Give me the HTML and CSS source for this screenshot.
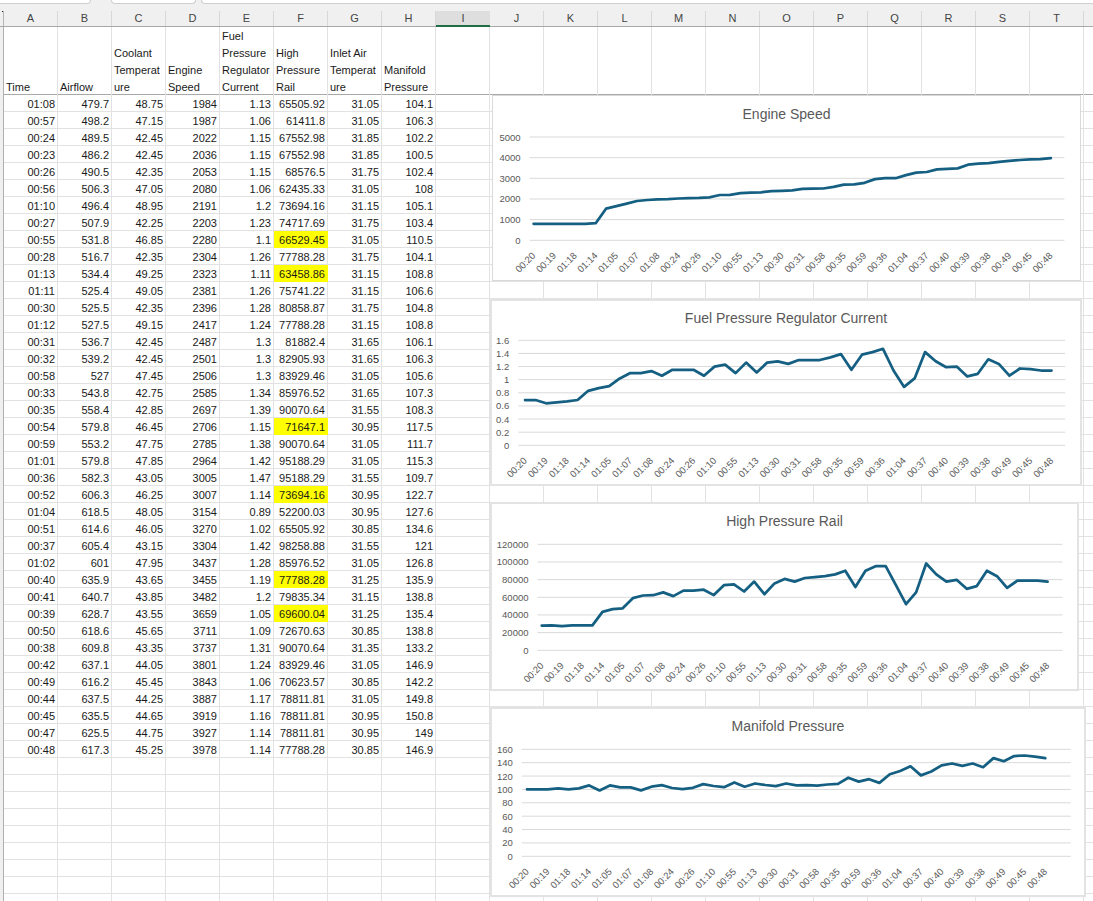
FILE: index.html
```html
<!DOCTYPE html>
<html lang="en">

<head>
    <meta charset="UTF-8">
    <title>Engine data</title>
    <link rel="stylesheet" href="styles.css">
</head>

<body>

    <div class="tabs">
        <div class="tab tab-first"></div>
        <div class="tab tab-second"></div>
        <div class="tab tab-rest"></div>
    </div>

    <div class="col-heads">
        <div class="corner"></div>
        <div class="col">A</div>
        <div class="col">B</div>
        <div class="col">C</div>
        <div class="col">D</div>
        <div class="col">E</div>
        <div class="col">F</div>
        <div class="col">G</div>
        <div class="col">H</div>
        <div class="col selected">I</div>
        <div class="col">J</div>
        <div class="col">K</div>
        <div class="col">L</div>
        <div class="col">M</div>
        <div class="col">N</div>
        <div class="col">O</div>
        <div class="col">P</div>
        <div class="col">Q</div>
        <div class="col">R</div>
        <div class="col">S</div>
        <div class="col">T</div>
    </div>

    <div class="sheet">
        <div class="row-heads"></div>
        <div class="grid">
            <table id="data">
                <thead>
                    <tr>
                        <th><div>Time</div></th>
                        <th><div>Airflow</div></th>
                        <th><div>Coolant<br>Temperat<br>ure</div></th>
                        <th><div>Engine<br>Speed</div></th>
                        <th><div>Fuel<br>Pressure<br>Regulator<br>Current</div></th>
                        <th><div>High<br>Pressure<br>Rail</div></th>
                        <th><div>Inlet Air<br>Temperat<br>ure</div></th>
                        <th><div>Manifold<br>Pressure</div></th>
                        <th></th><th></th><th></th><th></th><th></th><th></th>
                        <th></th><th></th><th></th><th></th><th></th><th></th>
                        <th></th>
                    </tr>
                </thead>
                <tbody>
                    <tr><td>01:08</td><td>479.7</td><td>48.75</td><td>1984</td><td>1.13</td><td>65505.92</td><td>31.05</td><td>104.1</td></tr>
                    <tr><td>00:57</td><td>498.2</td><td>47.15</td><td>1987</td><td>1.06</td><td>61411.8</td><td>31.05</td><td>106.3</td></tr>
                    <tr><td>00:24</td><td>489.5</td><td>42.45</td><td>2022</td><td>1.15</td><td>67552.98</td><td>31.85</td><td>102.2</td></tr>
                    <tr><td>00:23</td><td>486.2</td><td>42.45</td><td>2036</td><td>1.15</td><td>67552.98</td><td>31.85</td><td>100.5</td></tr>
                    <tr><td>00:26</td><td>490.5</td><td>42.35</td><td>2053</td><td>1.15</td><td>68576.5</td><td>31.75</td><td>102.4</td></tr>
                    <tr><td>00:56</td><td>506.3</td><td>47.05</td><td>2080</td><td>1.06</td><td>62435.33</td><td>31.05</td><td>108</td></tr>
                    <tr><td>01:10</td><td>496.4</td><td>48.95</td><td>2191</td><td>1.2</td><td>73694.16</td><td>31.15</td><td>105.1</td></tr>
                    <tr><td>00:27</td><td>507.9</td><td>42.25</td><td>2203</td><td>1.23</td><td>74717.69</td><td>31.75</td><td>103.4</td></tr>
                    <tr><td>00:55</td><td>531.8</td><td>46.85</td><td>2280</td><td>1.1</td><td class="mark">66529.45</td><td>31.05</td><td>110.5</td></tr>
                    <tr><td>00:28</td><td>516.7</td><td>42.35</td><td>2304</td><td>1.26</td><td>77788.28</td><td>31.75</td><td>104.1</td></tr>
                    <tr><td>01:13</td><td>534.4</td><td>49.25</td><td>2323</td><td>1.11</td><td class="mark">63458.86</td><td>31.15</td><td>108.8</td></tr>
                    <tr><td>01:11</td><td>525.4</td><td>49.05</td><td>2381</td><td>1.26</td><td>75741.22</td><td>31.15</td><td>106.6</td></tr>
                    <tr><td>00:30</td><td>525.5</td><td>42.35</td><td>2396</td><td>1.28</td><td>80858.87</td><td>31.75</td><td>104.8</td></tr>
                    <tr><td>01:12</td><td>527.5</td><td>49.15</td><td>2417</td><td>1.24</td><td>77788.28</td><td>31.15</td><td>108.8</td></tr>
                    <tr><td>00:31</td><td>536.7</td><td>42.45</td><td>2487</td><td>1.3</td><td>81882.4</td><td>31.65</td><td>106.1</td></tr>
                    <tr><td>00:32</td><td>539.2</td><td>42.45</td><td>2501</td><td>1.3</td><td>82905.93</td><td>31.65</td><td>106.3</td></tr>
                    <tr><td>00:58</td><td>527</td><td>47.45</td><td>2506</td><td>1.3</td><td>83929.46</td><td>31.05</td><td>105.6</td></tr>
                    <tr><td>00:33</td><td>543.8</td><td>42.75</td><td>2585</td><td>1.34</td><td>85976.52</td><td>31.65</td><td>107.3</td></tr>
                    <tr><td>00:35</td><td>558.4</td><td>42.85</td><td>2697</td><td>1.39</td><td>90070.64</td><td>31.55</td><td>108.3</td></tr>
                    <tr><td>00:54</td><td>579.8</td><td>46.45</td><td>2706</td><td>1.15</td><td class="mark">71647.1</td><td>30.95</td><td>117.5</td></tr>
                    <tr><td>00:59</td><td>553.2</td><td>47.75</td><td>2785</td><td>1.38</td><td>90070.64</td><td>31.05</td><td>111.7</td></tr>
                    <tr><td>01:01</td><td>579.8</td><td>47.85</td><td>2964</td><td>1.42</td><td>95188.29</td><td>31.05</td><td>115.3</td></tr>
                    <tr><td>00:36</td><td>582.3</td><td>43.05</td><td>3005</td><td>1.47</td><td>95188.29</td><td>31.55</td><td>109.7</td></tr>
                    <tr><td>00:52</td><td>606.3</td><td>46.25</td><td>3007</td><td>1.14</td><td class="mark">73694.16</td><td>30.95</td><td>122.7</td></tr>
                    <tr><td>01:04</td><td>618.5</td><td>48.05</td><td>3154</td><td>0.89</td><td>52200.03</td><td>30.95</td><td>127.6</td></tr>
                    <tr><td>00:51</td><td>614.6</td><td>46.05</td><td>3270</td><td>1.02</td><td>65505.92</td><td>30.85</td><td>134.6</td></tr>
                    <tr><td>00:37</td><td>605.4</td><td>43.15</td><td>3304</td><td>1.42</td><td>98258.88</td><td>31.55</td><td>121</td></tr>
                    <tr><td>01:02</td><td>601</td><td>47.95</td><td>3437</td><td>1.28</td><td>85976.52</td><td>31.05</td><td>126.8</td></tr>
                    <tr><td>00:40</td><td>635.9</td><td>43.65</td><td>3455</td><td>1.19</td><td class="mark">77788.28</td><td>31.25</td><td>135.9</td></tr>
                    <tr><td>00:41</td><td>640.7</td><td>43.85</td><td>3482</td><td>1.2</td><td>79835.34</td><td>31.15</td><td>138.8</td></tr>
                    <tr><td>00:39</td><td>628.7</td><td>43.55</td><td>3659</td><td>1.05</td><td class="mark">69600.04</td><td>31.25</td><td>135.4</td></tr>
                    <tr><td>00:50</td><td>618.6</td><td>45.65</td><td>3711</td><td>1.09</td><td>72670.63</td><td>30.85</td><td>138.8</td></tr>
                    <tr><td>00:38</td><td>609.8</td><td>43.35</td><td>3737</td><td>1.31</td><td>90070.64</td><td>31.35</td><td>133.2</td></tr>
                    <tr><td>00:42</td><td>637.1</td><td>44.05</td><td>3801</td><td>1.24</td><td>83929.46</td><td>31.05</td><td>146.9</td></tr>
                    <tr><td>00:49</td><td>616.2</td><td>45.45</td><td>3843</td><td>1.06</td><td>70623.57</td><td>30.85</td><td>142.2</td></tr>
                    <tr><td>00:44</td><td>637.5</td><td>44.25</td><td>3887</td><td>1.17</td><td>78811.81</td><td>31.05</td><td>149.8</td></tr>
                    <tr><td>00:45</td><td>635.5</td><td>44.65</td><td>3919</td><td>1.16</td><td>78811.81</td><td>30.95</td><td>150.8</td></tr>
                    <tr><td>00:47</td><td>625.5</td><td>44.75</td><td>3927</td><td>1.14</td><td>78811.81</td><td>30.95</td><td>149</td></tr>
                    <tr><td>00:48</td><td>617.3</td><td>45.25</td><td>3978</td><td>1.14</td><td>77788.28</td><td>30.85</td><td>146.9</td></tr>
                </tbody>
            </table>
        </div>
    </div>

    <div class="chart chart-speed" id="chart-speed">
        <h3>Engine Speed</h3>
        <svg></svg>
    </div>
    <div class="chart chart-fuel" id="chart-fuel">
        <h3>Fuel Pressure Regulator Current</h3>
        <svg></svg>
    </div>
    <div class="chart chart-rail" id="chart-rail">
        <h3>High Pressure Rail</h3>
        <svg></svg>
    </div>
    <div class="chart chart-manifold" id="chart-manifold">
        <h3>Manifold Pressure</h3>
        <svg></svg>
    </div>

    <script src="script.js"></script>

</body>

</html>
```

FILE: styles.css
```css
*,
*::before,
*::after {
    margin: 0;
    padding: 0;
    box-sizing: border-box;
}

body {
    width: 1093px;
    height: 901px;
    overflow: hidden;
    background-color: #fff;
    font-family: "Liberation Sans", Arial, sans-serif;
    font-size: 11px;
    color: #1a1a1a;
}

/* sheet tabs cut off at the very top */
.tabs {
    display: flex;
    height: 4px;
    background-color: #f0f0f0;
}

.tab {
    background-color: #fff;
    border-bottom: 1px solid #cfcfcf;
}

.tab-first {
    width: 91px;
    border-right: 1px solid #cfcfcf;
    border-bottom-right-radius: 4px;
}

.tab-second {
    width: 85px;
    margin-left: 20px;
    border-left: 1px solid #cfcfcf;
    border-right: 1px solid #cfcfcf;
    border-radius: 0 0 4px 4px;
}

.tab-rest {
    flex: 1;
    margin-left: 5px;
    border-left: 1px solid #cfcfcf;
    border-bottom-left-radius: 4px;
}

.col-heads {
    display: flex;
    align-items: flex-end;
    height: 23px;
    background-color: #f0f0f0;
    border-bottom: 1px solid #a8a8a8;
}

.corner {
    width: 4px;
    height: 15px;
    border-right: 1px solid #b5b5b5;
    background: linear-gradient(#222, #222) no-repeat 2px 0 / 1px 1px;
}

.col {
    width: 54px;
    height: 15px;
    line-height: 15px;
    text-align: center;
    color: #444;
    border-right: 1px solid #d8d8d8;
}

.col.selected {
    height: 16px;
    margin-bottom: -1px;
    background-color: #dedede;
    border-right: none;
    border-bottom: 2px solid #1f6e43;
}

.sheet {
    display: flex;
    height: 874px;
}

.row-heads {
    width: 4px;
    background-color: #f0f0f0;
    border-right: 1px solid #b0b0b0;
}

.grid {
    flex: 1;
    overflow: hidden;
    background-image:
        repeating-linear-gradient(to right, transparent 0 53px, #e2e2e2 53px 54px),
        repeating-linear-gradient(to bottom, transparent 0 16px, #e2e2e2 16px 17px);
}

#data {
    width: 1134px;
    table-layout: fixed;
    border-collapse: separate;
    border-spacing: 0;
}

#data th {
    height: 68px;
    padding: 0 2px;
    text-align: left;
    vertical-align: bottom;
    font-weight: normal;
    line-height: 17px;
    white-space: nowrap;
    background-color: #fff;
    border-right: 1px solid #e2e2e2;
    box-shadow: inset 0 -1px 0 #a8a8a8;
}

/* header text sits a pixel low, into the frozen-pane line */
#data th div {
    margin-bottom: -1px;
}

#data th:last-child {
    border-right: none;
}

#data td {
    height: 17px;
    padding: 1px 3px 0 0;
    text-align: right;
    line-height: 16px;
    white-space: nowrap;
}

#data td.mark {
    background-color: #ffff00;
}

/* charts float over the sheet, like they do in a workbook */
.chart {
    position: absolute;
    background-color: #fff;
    border: 2px solid #e3e3e3;
    padding-top: 8px;
}

.chart h3 {
    font-size: 14px;
    font-weight: normal;
    line-height: 18px;
    text-align: center;
    color: #595959;
}

.chart svg {
    position: absolute;
    top: -2px;
    left: -2px;
}

.chart-speed {
    left: 492px;
    top: 95px;
    width: 589px;
    height: 186px;
    border-width: 1px;
    border-color: #d9d9d9;
    padding-top: 9px;
}

.chart-speed svg {
    top: -1px;
    left: -1px;
}

.chart-fuel {
    left: 490px;
    top: 299px;
    width: 592px;
    height: 187px;
}

.chart-rail {
    left: 490px;
    top: 502px;
    width: 589px;
    height: 189px;
}

.chart-manifold {
    left: 490px;
    top: 707px;
    width: 596px;
    height: 190px;
}

.gridline {
    stroke: #d9d9d9;
    stroke-width: 1;
}

.series {
    fill: none;
    stroke: #156082;
    stroke-width: 2.75;
    stroke-linejoin: round;
    stroke-linecap: round;
}

.axis-label {
    font-size: 9.5px;
    fill: #595959;
}
```

FILE: script.js
```js
// the charts start 12 points before the rows that are in view
var leadTimes = ['00:20', '00:19', '01:18', '01:14', '01:05', '01:07'];

var charts = [
    {
        id: 'chart-speed', col: 3, max: 5000, step: 1000,
        left: 529.6, right: 1064.4, top: 137, bottom: 240.3, first: 533.6, last: 1050.8,
        lead: [800, 800, 800, 800, 800, 800, 830, 1530, 1650, 1770, 1900, 1950]
    },
    {
        id: 'chart-fuel', col: 4, max: 1.6, step: 0.2,
        left: 518.3, right: 1065.2, top: 340.3, bottom: 445.3, first: 525, last: 1051.5,
        lead: [0.69, 0.69, 0.64, 0.655, 0.67, 0.69, 0.83, 0.87, 0.9, 1.02, 1.1, 1.1]
    },
    {
        id: 'chart-rail', col: 5, max: 120000, step: 20000,
        left: 537.5, right: 1062.5, top: 544.3, bottom: 650.3, first: 541.8, last: 1047.6,
        lead: [28000, 28300, 27300, 28300, 28300, 28300, 43500, 46500, 47500, 59000, 62000, 62400]
    },
    {
        id: 'chart-manifold', col: 7, max: 160, step: 20,
        left: 521.8, right: 1070.7, top: 749.3, bottom: 856.3, first: 527, last: 1045.3,
        lead: [100, 100, 100, 101.5, 100, 101.5, 106, 98.5, 106, 103, 103, 98.5]
    }
];

var rows = document.querySelectorAll('#data tbody tr');
var svgNS = 'http://www.w3.org/2000/svg';

function add(svg, name, attrs, text) {
    var el = document.createElementNS(svgNS, name);
    for (var key in attrs) {
        el.setAttribute(key, attrs[key]);
    }
    if (text !== undefined) {
        el.textContent = text;
    }
    svg.appendChild(el);
}

function columnValues(col) {
    var values = [];
    rows.forEach(function (row) {
        values.push(parseFloat(row.cells[col].textContent));
    });
    return values;
}

function columnTimes() {
    var times = [];
    rows.forEach(function (row) {
        times.push(row.cells[0].textContent);
    });
    return times;
}

charts.forEach(function (chart) {
    var box = document.getElementById(chart.id);
    var svg = box.querySelector('svg');
    var x0 = box.offsetLeft, y0 = box.offsetTop;
    var w = box.offsetWidth, h = box.offsetHeight;

    svg.setAttribute('width', w);
    svg.setAttribute('height', h);
    svg.setAttribute('viewBox', x0 + ' ' + y0 + ' ' + w + ' ' + h);

    function yOf(value) {
        return chart.bottom - (chart.bottom - chart.top) * value / chart.max;
    }

    // gridlines and value labels
    var steps = Math.round(chart.max / chart.step);
    for (var i = 0; i <= steps; i++) {
        var value = i * chart.step;
        var y = yOf(value);
        add(svg, 'line', { class: 'gridline', x1: chart.left, x2: chart.right, y1: y, y2: y });
        add(svg, 'text', {
            class: 'axis-label', x: chart.left - 9, y: y + 3.5, 'text-anchor': 'end'
        }, parseFloat(value.toFixed(1)));
    }

    var values = chart.lead.concat(columnValues(chart.col));
    var times = leadTimes.map(function (t) { return [t, '']; });
    times = [].concat.apply([], times).concat(columnTimes());
    var gap = (chart.last - chart.first) / (values.length - 1);

    var points = values.map(function (v, n) {
        return (chart.first + n * gap).toFixed(1) + ',' + yOf(v).toFixed(1);
    });
    add(svg, 'polyline', { class: 'series', points: points.join(' ') });

    // every other time fits on the axis
    for (var n = 0; n < times.length; n += 2) {
        var lx = chart.first + n * gap + 2.5;
        var ly = chart.bottom + 16;
        add(svg, 'text', {
            class: 'axis-label', x: lx, y: ly, 'text-anchor': 'end',
            transform: 'rotate(-45 ' + lx + ' ' + ly + ')'
        }, times[n]);
    }
});
```
